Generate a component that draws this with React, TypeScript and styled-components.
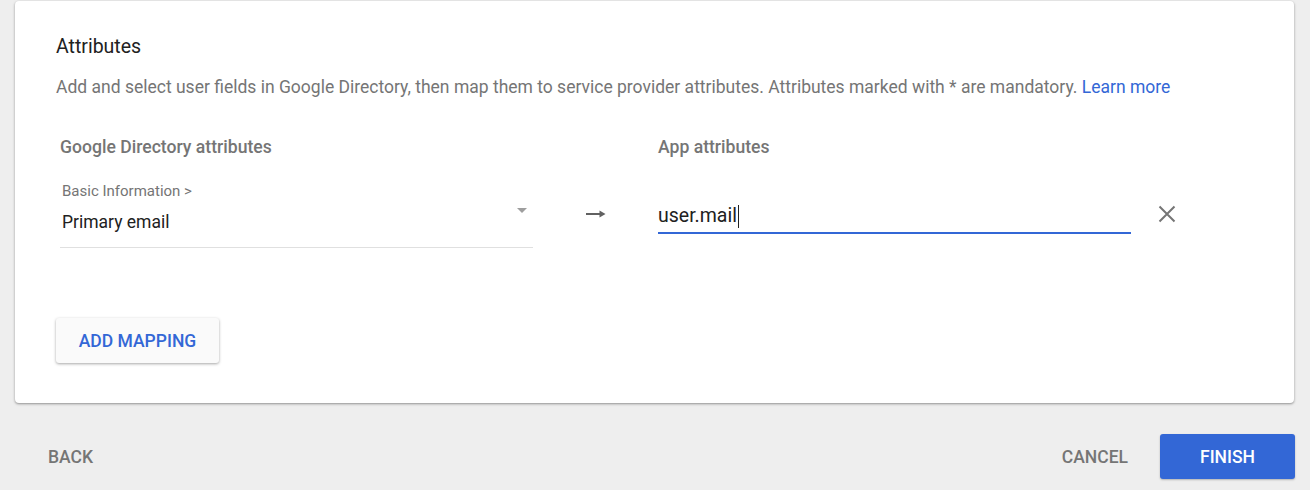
import React from "react";
import styled, { createGlobalStyle } from "styled-components";

const GlobalStyle = createGlobalStyle`
  html, body {
    margin: 0;
    padding: 0;
    background: #eeeeee;
    font-family: Roboto, "Noto Sans", Arial, sans-serif;
  }
  * { box-sizing: border-box; }
`;

const Page = styled.div`
  width: 1310px;
  height: 490px;
  display: flex;
  flex-direction: column;
`;

const Card = styled.section`
  margin: 1px 16px 0 15px;
  background: #fff;
  border-radius: 4px;
  box-shadow: 0 1px 2px rgba(0, 0, 0, 0.3), 0 1px 3px 1px rgba(0, 0, 0, 0.08);
  padding: 34px 41px 39px 41px;
  height: 402px;
`;

const Title = styled.h2`
  margin: 0;
  font-size: 19.5px;
  font-weight: 400;
  color: #212121;
  line-height: 24px;
`;

const Description = styled.p`
  margin: 16px 0 0 0;
  font-size: 17.5px;
  color: #757575;
  line-height: 24px;
  white-space: nowrap;
`;

const LearnMore = styled.a`
  color: #3367d6;
  text-decoration: none;
  cursor: pointer;
`;

const MappingGrid = styled.div`
  margin-top: 37px;
  display: grid;
  grid-template-columns: 473px 125px 473px 64px;
  padding-left: 4px;
  align-items: start;
`;

const ColumnHeading = styled.div`
  font-size: 17.6px;
  font-weight: 500;
  color: #757575;
  line-height: 22px;
  padding-bottom: 18px;
`;

const SelectField = styled.div`
  position: relative;
  border-bottom: 1px solid #e0e0e0;
  padding: 6px 2px 13px 2px;
  cursor: pointer;
`;

const SelectLabel = styled.div`
  font-size: 15px;
  color: #757575;
  line-height: 18px;
`;

const SelectValue = styled.div`
  font-size: 17.5px;
  color: #212121;
  line-height: 24px;
  margin-top: 10px;
`;

const Caret = styled.span`
  position: absolute;
  right: 6px;
  top: 32px;
  width: 0;
  height: 0;
  border-left: 5px solid transparent;
  border-right: 5px solid transparent;
  border-top: 5px solid #9e9e9e;
`;

const ArrowCell = styled.div`
  padding: 33px 0 0 53px;
  svg {
    display: block;
  }
`;

const TextField = styled.div`
  margin-top: 28px;
  border-bottom: 2px solid #3367d6;
  font-size: 19.5px;
  color: #212121;
  line-height: 24px;
  padding-bottom: 4px;
  display: flex;
  align-items: center;
  cursor: text;
`;

const TextCursor = styled.span`
  display: inline-block;
  width: 1px;
  height: 23px;
  margin-left: 1px;
  background: #212121;
`;

const RemoveButton = styled.button`
  border: none;
  background: transparent;
  padding: 0;
  margin: 29px 0 0 27px;
  width: 18px;
  height: 18px;
  display: flex;
  cursor: pointer;
`;

const AddButton = styled.button`
  margin-top: 70px;
  height: 45px;
  width: 163px;
  padding: 0;
  border: none;
  border-radius: 3px;
  background: #fafafa;
  box-shadow: 0 1px 3px rgba(0, 0, 0, 0.35);
  color: #3367d6;
  font-family: inherit;
  font-size: 17.5px;
  font-weight: 500;
  cursor: pointer;
`;

const Footer = styled.div`
  display: flex;
  align-items: center;
  padding: 31px 15px 0 32px;
  gap: 16px;
`;

const TextButton = styled.button`
  border: none;
  background: transparent;
  font-family: inherit;
  font-size: 17.5px;
  font-weight: 500;
  color: #757575;
  height: 45px;
  padding: 0 16px;
  cursor: pointer;
`;

const Spacer = styled.div`
  flex: 1;
`;

const PrimaryButton = styled.button`
  border: none;
  border-radius: 3px;
  background: #3367d6;
  color: #fff;
  font-family: inherit;
  font-size: 17.5px;
  font-weight: 500;
  height: 45px;
  width: 135px;
  box-shadow: 0 1px 2px rgba(0, 0, 0, 0.25);
  cursor: pointer;
`;

const App = () => {
  return (
    <Page>
      <GlobalStyle />
      <Card>
        <Title>Attributes</Title>
        <Description>
          Add and select user fields in Google Directory, then map them to service provider
          attributes. Attributes marked with * are mandatory. <LearnMore>Learn more</LearnMore>
        </Description>
        <MappingGrid>
          <ColumnHeading>Google Directory attributes</ColumnHeading>
          <div />
          <ColumnHeading>App attributes</ColumnHeading>
          <div />
          <SelectField>
            <SelectLabel>Basic Information &gt;</SelectLabel>
            <SelectValue>Primary email</SelectValue>
            <Caret />
          </SelectField>
          <ArrowCell>
            <svg width="20" height="10" viewBox="0 0 20 10">
              <path d="M0 5h15" stroke="#616161" strokeWidth="2" fill="none" />
              <path d="M13.5 1.5l6 3.5-6 3.5z" fill="#616161" />
            </svg>
          </ArrowCell>
          <TextField>
            user.mail
            <TextCursor />
          </TextField>
          <RemoveButton aria-label="Remove mapping">
            <svg width="18" height="18" viewBox="0 0 18 18">
              <path d="M1.5 1.5l15 15M16.5 1.5l-15 15" stroke="#757575" strokeWidth="2" fill="none" />
            </svg>
          </RemoveButton>
        </MappingGrid>
        <AddButton>ADD MAPPING</AddButton>
      </Card>
      <Footer>
        <TextButton>BACK</TextButton>
        <Spacer />
        <TextButton>CANCEL</TextButton>
        <PrimaryButton>FINISH</PrimaryButton>
      </Footer>
    </Page>
  );
};

export default App;
